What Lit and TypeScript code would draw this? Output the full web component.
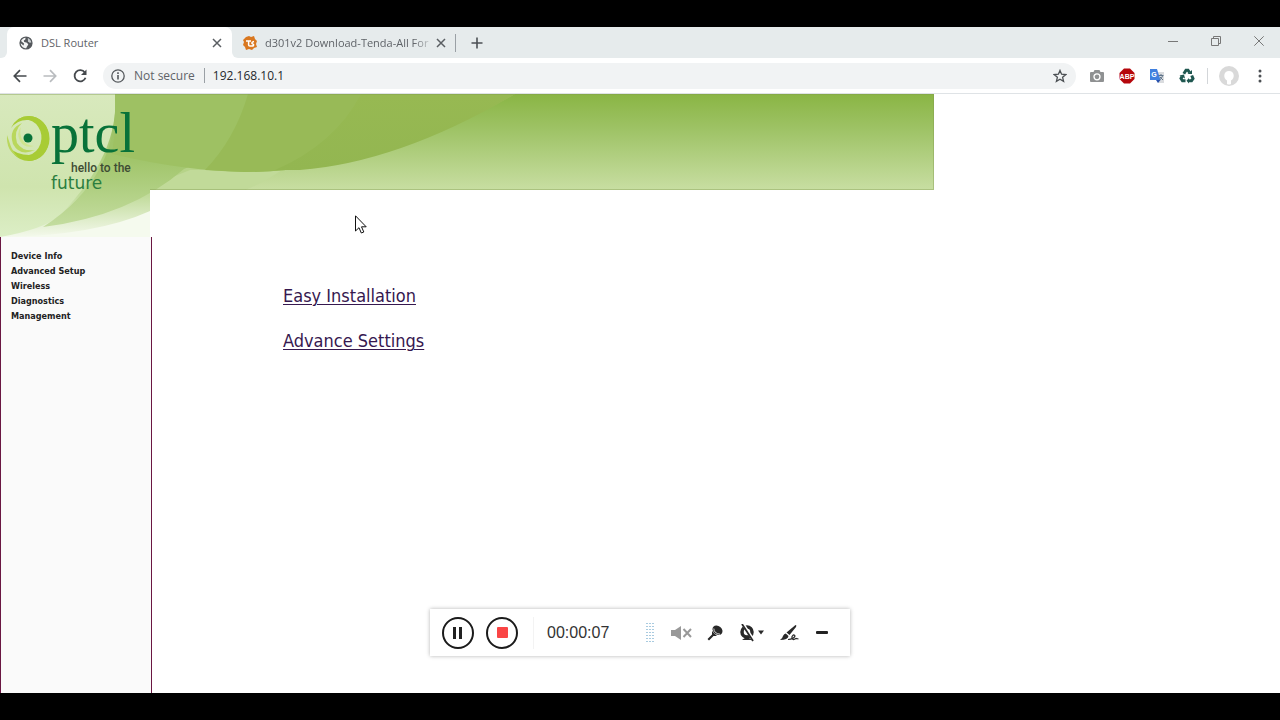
import { LitElement, html, css, svg } from "lit";
import { customElement } from "lit/decorators.js";

const closeIcon = html`<svg width="10" height="10" viewBox="0 0 10 10" aria-hidden="true"><path d="M1 1L9 9M9 1L1 9" stroke="#5a5e62" stroke-width="1.5" /></svg>`;

@customElement("browser-chrome")
class BrowserChrome extends LitElement {
  static styles = css`
    :host { display: block; font-family: "Open Sans", "Noto Sans", sans-serif; color: #5f6368; }
    button { border: 0; padding: 0; background: none; color: inherit; font: inherit; display: flex; align-items: center; justify-content: center; flex: none; }
    svg { display: block; flex: none; }
    .strip { display: flex; height: 31px; background: #e6ebec; align-items: stretch; }
    .lead { width: 7px; background: #fff; flex: none; }
    .lead i { display: block; height: 100%; background: #e6ebec; border-bottom-right-radius: 6px; }
    .tab { display: flex; align-items: center; font-size: 11px; box-sizing: border-box; }
    .tab.active { width: 225px; background: #fff; border-radius: 7px 7px 0 0; padding: 0 10px 0 12px; }
    .behind { background: linear-gradient(#e6ebec 50%, #fff 50%); display: flex; }
    .idle { background: #e6ebec; border-bottom-left-radius: 6px; width: 223px; padding: 0 9px 0 11px; }
    .label { padding: 0; margin-left: 8px; flex: 1; min-width: 0; white-space: nowrap; text-align: left; justify-content: flex-start; }
    .fade { -webkit-mask-image: linear-gradient(90deg, #000 90%, rgba(0, 0, 0, 0.2) 100%); }
    .close { width: 10px; height: 20px; }
    .idle .close { margin-left: 6px; }
    .rule { width: 1px; height: 18px; background: #9aa0a5; align-self: center; }
    .new { width: 42px; }
    .window { margin-left: auto; display: flex; padding-bottom: 4px; }
    .window button { width: 43px; }
    .bar { display: flex; align-items: center; height: 35px; background: #fff; border-bottom: 1px solid #dfe3e6; padding: 0 5px; }
    .nav { width: 30px; height: 26px; }
    .box { flex: 1; display: flex; align-items: center; height: 26px; background: #f1f3f4; border-radius: 13px; margin-left: 8px; padding: 0 9px 0 8px; font-size: 12px; }
    .box .secure { margin: 0 9px; white-space: nowrap; }
    .box .rule { height: 15px; }
    .url { flex: 1; border: 0; background: none; font: inherit; color: #25282c; padding: 0; margin-left: 8px; min-width: 0; outline: 0; }
    .ext { width: 30px; height: 26px; }
    .exts { display: flex; align-items: center; margin-left: 6px; }
    .exts .rule { height: 16px; background: #d3d6d9; margin-left: 5px; }
    .avatar { width: 42px; height: 26px; }
    .more { width: 20px; height: 26px; margin-right: 5px; }
  `;

  render() {
    return html`
      <div class="strip" role="tablist">
        <div class="lead"><i></i></div>
        <div class="tab active">
          <svg width="14" height="14" viewBox="0 0 14 14"><circle cx="7" cy="7" r="6.6" fill="#54585c" /><path d="M2 5C3 3 4.600 1.700 6.600 1.700L6.300 3.500 4.800 4.600 5.200 6 8 6.700 9.300 8.500 8 10.500 7.200 12.300C4 12.300 1.900 10 1.700 7.300L4.600 9.500 5 7.600Z" fill="#f2f4f4" /><path d="M8.800 2.100C10.600 3 12 4.500 12.300 6.500L10.500 6.700 9 5.300Z" fill="#c9ced0" /></svg>
          <button class="label" role="tab" aria-selected="true">DSL Router</button>
          <button class="close" aria-label="Close tab">${closeIcon}</button>
        </div>
        <div class="behind">
          <div class="tab idle">
            <svg width="14" height="14" viewBox="0 0 14 14"><path d="M3 1L6 0 8 1 11 0 12 3 14 5 13 8 14 11 11 12 9 14 6 13 3 14 2 11 0 9 1 6 0 4Z" fill="#d9771f" /><path d="M3 5H8M5.600 5V9Q5.600 10 7 10H9Q11 10 10.500 8.500L9 7.500Q8.500 6 11 5.500" fill="none" stroke="#fff" stroke-width="1.500" /></svg>
            <button class="label fade" role="tab" aria-selected="false">d301v2 Download-Tenda-All For</button>
            <button class="close" aria-label="Close tab">${closeIcon}</button>
          </div>
        </div>
        <span class="rule"></span>
        <button class="new" aria-label="New tab"><svg width="12" height="12" viewBox="0 0 12 12"><path d="M6 .5V11.500M.5 6H11.500" stroke="#4c5054" stroke-width="1.600" /></svg></button>
        <div class="window">
          <button aria-label="Minimize"><svg width="10" height="10" viewBox="0 0 10 10"><path d="M0 5.500H10" stroke="#777" /></svg></button>
          <button aria-label="Restore"><svg width="10" height="10" viewBox="0 0 10 10"><path d="M.5 2.500H7.500V9.500H.5ZM2.500 2.500V.5H9.500V7.500H7.500" fill="none" stroke="#777" /></svg></button>
          <button aria-label="Close"><svg width="10" height="10" viewBox="0 0 10 10"><path d="M.3 .3L9.700 9.700M9.700 .3L.3 9.700" stroke="#777" /></svg></button>
        </div>
      </div>
      <div class="bar">
        <button class="nav" aria-label="Back"><svg width="14" height="14" viewBox="0 0 14 14"><path d="M13.500 7H1.500M7 1.200L1.300 7 7 12.800" fill="none" stroke="#45494d" stroke-width="1.700" /></svg></button>
        <button class="nav" aria-label="Forward"><svg width="14" height="14" viewBox="0 0 14 14"><path d="M.5 7H12.500M7 1.200L12.700 7 7 12.800" fill="none" stroke="#b9bcbf" stroke-width="1.700" /></svg></button>
        <button class="nav" aria-label="Reload"><svg width="14" height="14" viewBox="0 0 14 14"><path d="M11.800 3.500A5.600 5.600 0 1 0 12.500 8.700" fill="none" stroke="#45494d" stroke-width="1.800" /><path d="M13.500 .5V6H8Z" fill="#45494d" /></svg></button>
        <div class="box">
          <svg width="14" height="14" viewBox="0 0 14 14"><circle cx="7" cy="7" r="6.200" fill="none" stroke="#54585c" stroke-width="1.300" /><path d="M7 6V10.500M7 3.300V4.900" stroke="#54585c" stroke-width="1.600" /></svg>
          <span class="secure">Not secure</span><span class="rule"></span>
          <input class="url" aria-label="Address" value="192.168.10.1" />
          <svg width="14" height="14" viewBox="0 0 14 14"><path d="M7 1.400L8.600 5.200 12.800 5.600 9.600 8.300 10.600 12.400 7 10.200 3.400 12.400 4.400 8.300 1.200 5.600 5.400 5.200Z" fill="none" stroke="#4c5054" stroke-width="1.300" /></svg>
        </div>
        <div class="exts">
          <button class="ext" aria-label="Capture"><svg width="14" height="14" viewBox="0 0 14 14"><path fill-rule="evenodd" d="M4.500 1H9.500L10.500 3H13A1 1 0 0 1 14 4V12A1 1 0 0 1 13 13H1A1 1 0 0 1 0 12V4A1 1 0 0 1 1 3H3.500Z" fill="#8f9192" /><circle cx="7" cy="7.800" r="3" fill="none" stroke="#fff" stroke-width="1.300" /></svg></button>
          <button class="ext" aria-label="Ad block"><svg width="16" height="16" viewBox="0 0 16 16"><path d="M5 .5H11L15.500 5V11L11 15.500H5L.5 11V5Z" fill="#b5070c" /><text x="8" y="10.500" text-anchor="middle" font-family="Liberation Sans, sans-serif" font-weight="bold" font-size="7" fill="#fff">ABP</text></svg></button>
          <button class="ext" aria-label="Translate"><svg width="16" height="16" viewBox="0 0 16 16"><path d="M6 4H15V15H9Z" fill="#dadcdf" /><path d="M1 1H8L11.500 12H1Z" fill="#4080df" /><path d="M7 12H11.500L9 15Z" fill="#244fae" /><path d="M9.500 7.500H14.500M12 6V7.500M13.500 8Q12.500 11 10.500 12M11 9L14 12" fill="none" stroke="#60758a" /><text x="5" y="9" text-anchor="middle" font-family="Liberation Sans, sans-serif" font-weight="bold" font-size="7" fill="#fff">G</text></svg></button>
          <button class="ext" aria-label="Recycle"><svg width="16" height="16" viewBox="0 0 16 16" fill="none" stroke="#1f5750" stroke-width="3"><path d="M4.800 5.700L7 2.200H9L10.500 4.500" /><path d="M12.700 7.500L14 10.500 12.500 12.700H9.500" /><path d="M6.500 12.700H3.500L2 10.500 3 8.500" /><path d="M8.500 6H13V2ZM10 10V15.500L7.500 12.700ZM.5 7.500L5 6.500 6 10.500Z" fill="#1f5750" stroke="none" /></svg></button>
          <span class="rule"></span>
          <button class="avatar" aria-label="Profile"><svg width="20" height="20" viewBox="0 0 20 20"><circle cx="10" cy="10" r="10" fill="#d9d9d9" /><path d="M8 18V14.500Q5 12.500 5.300 9 6 5 10 5 14 5 14.700 9 15 12.500 12 14.500V18Q10 19 8 18Z" fill="#fff" /></svg></button>
          <button class="more" aria-label="Menu"><svg width="4" height="14" viewBox="0 0 4 14" fill="#4c5054"><circle cx="2" cy="2" r="1.500" /><circle cx="2" cy="7" r="1.500" /><circle cx="2" cy="12" r="1.500" /></svg></button>
        </div>
      </div>`;
  }
}

const art = svg`
  <defs>
    <linearGradient id="sky" x2="0" y2="1"><stop offset="0" stop-color="#8ab544" /><stop offset=".35" stop-color="#9dc264" /><stop offset="1" stop-color="#c8dea2" /></linearGradient>
    <linearGradient id="pale" x2="0" y2="1"><stop offset="0" stop-color="#d8e9bd" /><stop offset=".65" stop-color="#cfe4ae" /><stop offset="1" stop-color="#dceec6" /></linearGradient>
    <linearGradient id="mid" x2="0" y2="1"><stop offset="0" stop-color="#9cc063" /><stop offset=".5" stop-color="#a1c56b" /><stop offset="1" stop-color="#c4dda0" /></linearGradient>
    <linearGradient id="low" x2="0" y2="1"><stop offset="0" stop-color="#accf7c" /><stop offset=".5" stop-color="#c1db9b" /><stop offset="1" stop-color="#f4f9ec" /></linearGradient>
    <linearGradient id="leaf" x2="0" y2="1"><stop offset="0" stop-color="#97b952" /><stop offset="1" stop-color="#93b651" /></linearGradient>
    <clipPath id="edge"><path d="M0 0H934V96H150V143H0Z" /></clipPath>
  </defs>
  <g clip-path="url(#edge)">
    <path d="M0 0H934V96H0Z" fill="url(#sky)" />
    <path d="M0 60H150V143H0Z" fill="url(#low)" />
    <path d="M130 66H290L245 96H130Z" fill="#b6d388" />
    <path d="M190 76H282Q265 88 245 96H140Z" fill="#c1da99" />
    <path d="M0 0H115Q120 60 60 121 45 135 0 143Z" fill="url(#pale)" />
    <path d="M115 0H250Q245 50 184 75 130 122 43 133 120 83 115 0Z" fill="url(#mid)" />
    <path d="M115 0H515Q380 78 245 78 185 77 112 60Q117 30 115 0Z" fill="#9ec163" />
    <path d="M248 0H515Q380 78 245 78L205 76Q235 45 248 0Z" fill="#98ba57" />
    <path d="M361 0H515Q400 68 300 76H275Q335 50 361 0Z" fill="url(#leaf)" />
    <path d="M0 143Q95 142 150 117V143Z" fill="#f5faee" />
    <path d="M0 .5H934M933.500 0V96M150 95.500H934" stroke="#7f9a4e" opacity=".4" />
  </g>
  <path d="M11 34Q17 22 29 22A20.500 22.500 0 1 1 10 54Q17 61 29 61A16.500 18 0 1 0 11 34Z" fill="#a8cc35" />
  <path d="M11 34Q17 22 29 22A20.500 22.500 0 0 1 29 67L29 62A17 18 0 0 0 29 26Q18 25 11 34Z" fill="#a8cc35" />
  <path d="M7 41Q6 57 18 63 12 57 10 50ZM22 29Q8 35 13 50 20 63 35 56 23 58 17 49 13 37 22 29Z" fill="#b9d75c" />
  <path d="M21 33Q16 39 20 47 25 55 34 52 26 52 22 45 19 39 21 33Z" fill="#cfe48f" />
  <circle cx="28" cy="44" r="4.500" fill="#087239" />
  <text x="51" y="58" font-family="Liberation Serif, serif" font-size="56" fill="#087239">ptcl</text>
  <text x="71" y="78" font-family="Roboto, sans-serif" font-weight="500" font-size="12" fill="#3e4c34">hello to the</text>
  <text x="51" y="95" font-family="DejaVu Sans, sans-serif" font-size="17" fill="#2b7e3f">future</text>
`;

@customElement("router-page")
class RouterPage extends LitElement {
  static styles = css`
    :host { display: flex; flex-direction: column; background: #fff; min-height: 0; }
    .banner { display: block; flex: none; }
    .cols { flex: 1; display: flex; min-height: 0; }
    nav { width: 150px; flex: none; background: #fafafa; border: solid #6a1742; border-width: 0 1px; }
    ul { list-style: none; margin: 0; padding: 12px 0 0 10px; }
    li a { display: block; font: bold 9px/15px "DejaVu Sans Condensed", "DejaVu Sans", Verdana, sans-serif; color: #222; text-decoration: none; }
    main { padding: 44px 0 0 131px; display: flex; flex-direction: column; align-items: flex-start; gap: 15px; }
    main a { font: 18px/30px "DejaVu Sans Condensed", "DejaVu Sans", Tahoma, sans-serif; color: #36184f; text-decoration: underline; text-underline-offset: 2px; text-decoration-thickness: 1px; }
  `;
  render() {
    const items = ["Device Info", "Advanced Setup", "Wireless", "Diagnostics", "Management"];
    return html`
      <svg class="banner" width="934" height="143" viewBox="0 0 934 143" role="img" aria-label="ptcl hello to the future">${art}</svg>
      <div class="cols">
        <nav><ul>${items.map((t) => html`<li><a href="#">${t}</a></li>`)}</ul></nav>
        <main><a href="#">Easy Installation</a><a href="#">Advance Settings</a></main>
      </div>`;
  }
}

@customElement("recorder-bar")
class RecorderBar extends LitElement {
  static styles = css`
    :host { display: flex; align-items: center; box-sizing: border-box; width: 420px; height: 47px; padding-left: 12px; background: #fff; box-shadow: 0 0 4px rgba(0, 0, 0, 0.3); }
    button { border: 0; background: none; padding: 0; display: flex; align-items: center; justify-content: center; flex: none; width: 32px; height: 32px; }
    .round { box-sizing: border-box; border: 2px solid #1b1b1b; border-radius: 50%; }
    .stop { margin-left: 12px; }
    .split { width: 1px; height: 32px; background: #f3f3f3; margin: 0 13px 0 15px; }
    time { font: 16px/20px "Liberation Sans", Arial, sans-serif; color: #333; width: 99px; }
    .tool { width: 34px; }
    .wide { width: 40px; }
    .grip { margin-right: 10px; }
    svg { display: block; }
  `;
  render() {
    const dots = [0, 1, 2, 3, 4, 5, 6].flatMap((r) => [0, 1, 2].map((c) => svg`<rect x=${c * 3} y=${r * 3} width="2" height="1" fill="#a9cbe0" />`));
    return html`
      <button class="round" aria-label="Pause"><svg width="10" height="12" viewBox="0 0 10 12"><path d="M0 0H3V12H0ZM6 0H9V12H6Z" fill="#222" /></svg></button>
      <button class="round stop" aria-label="Stop"><svg width="11" height="11" viewBox="0 0 11 11"><rect width="11" height="11" rx="1" fill="#fa4545" /></svg></button>
      <span class="split"></span>
      <time>00:00:07</time>
      <svg class="grip" width="8" height="19" viewBox="0 0 8 19">${dots}</svg>
      <button class="tool" aria-label="Mute"><svg width="22" height="16" viewBox="0 0 22 16"><path d="M1 5H5L11 1V15L5 11H1Z" fill="#999" /><path d="M13.500 4L21 12M21 4L13.500 12" stroke="#999" stroke-width="2" /></svg></button>
      <button class="tool" aria-label="Microphone"><svg width="16" height="16" viewBox="0 0 16 16"><ellipse cx="10.500" cy="5.200" rx="5.400" ry="4.300" transform="rotate(40 10.500 5.200)" fill="#292929" /><path d="M5 6L10 11 6.500 11 2 15.500 .5 14 5 9.500Z" fill="#292929" /><path d="M6.800 3.500Q7 8.500 13 9.200" fill="none" stroke="#fff" stroke-width=".8" /></svg></button>
      <button class="wide" aria-label="Webcam"><svg width="26" height="18" viewBox="0 0 26 18"><circle cx="8" cy="8" r="5" fill="none" stroke="#292929" stroke-width="3.500" /><path d="M3 16Q8 11 13 16Z" fill="#292929" /><path d="M4 0L15 17" stroke="#fff" stroke-width="3" /><path d="M3 0L14 17" stroke="#292929" stroke-width="1.800" /><path d="M19 6.500H25L22 10.500Z" fill="#292929" /></svg></button>
      <button class="tool" aria-label="Draw"><svg width="20" height="18" viewBox="0 0 20 18"><path d="M16.500 1Q18 1 17 3L10.500 11 7.500 8.500Z" fill="#292929" /><path d="M6.800 9.500L9.500 12Q9 16 1 16 3.500 14.500 4 12 5 9.500 6.800 9.500Z" fill="#292929" /><path d="M9 15.500Q15 15 16 12 15 9.500 13 12.500 12.500 16 15 15.500L17 14.500 19.500 15" fill="none" stroke="#292929" stroke-width="1.200" /></svg></button>
      <button aria-label="Collapse"><svg width="12" height="3" viewBox="0 0 12 3"><rect width="12" height="3" rx="1" fill="#222" /></svg></button>`;
  }
}

@customElement("app-root")
class AppRoot extends LitElement {
  static styles = css`
    :host { display: flex; flex-direction: column; height: 100vh; box-sizing: border-box; position: relative; background: #000; padding: 27px 0; overflow: hidden; }
    browser-chrome { flex: none; }
    router-page { flex: 1; }
    recorder-bar { position: absolute; bottom: 64px; left: calc(50% - 210px); }
    .cursor { position: absolute; left: 355px; top: 215px; }
  `;
  render() {
    return html`
      <browser-chrome></browser-chrome>
      <router-page></router-page>
      <recorder-bar></recorder-bar>
      <svg class="cursor" width="12" height="19" viewBox="0 0 12 19"><path d="M.5 .8V16L4 12.700 6.300 18 8.800 17 6.500 11.800H11.200Z" fill="#fff" stroke="#111" /></svg>`;
  }
}
